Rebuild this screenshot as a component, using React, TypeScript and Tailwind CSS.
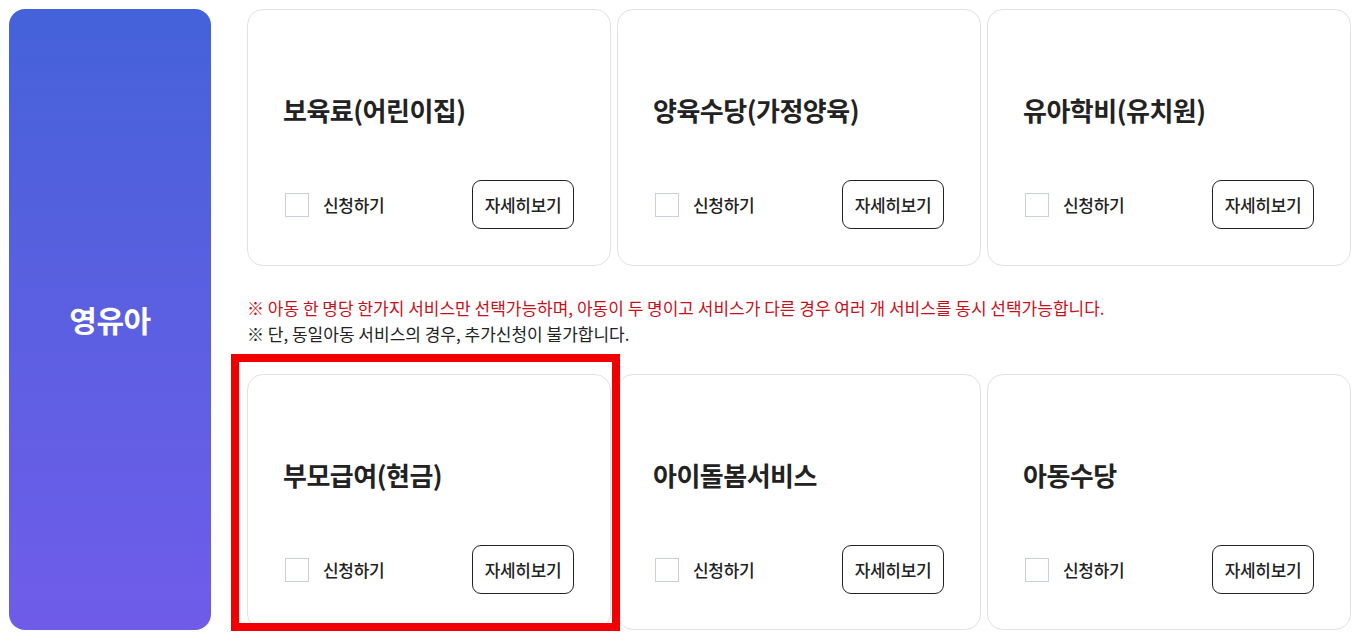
const font = "font-['Noto_Sans_CJK_KR','Noto_Sans',sans-serif]"

type Service = {
  title: string
}

const topRow: Service[] = [
  { title: '보육료(어린이집)' },
  { title: '양육수당(가정양육)' },
  { title: '유아학비(유치원)' },
]

const bottomRow: Service[] = [
  { title: '부모급여(현금)' },
  { title: '아이돌봄서비스' },
  { title: '아동수당' },
]

function ServiceCard({ service, height }: { service: Service; height: string }) {
  return (
    <div
      className={`flex flex-col rounded-[16px] border border-[#e2e2e2] bg-white pl-[35px] pr-[36px] pt-[83px] ${height}`}
    >
      <h3 className="text-[26px] font-bold leading-[34px] tracking-[-0.5px] text-[#222]">
        {service.title}
      </h3>
      <div className="mt-[53px] flex items-center justify-between">
        <label className="ml-[2px] flex items-center gap-[14px]">
          <span className="block h-[24px] w-[24px] border border-[#c9cfdc] bg-white" />
          <span className="text-[17px] font-medium tracking-[-0.3px] text-[#222]">신청하기</span>
        </label>
        <button
          type="button"
          className="flex h-[49px] w-[102px] items-center justify-center rounded-[9px] border border-[#222] bg-white text-[17px] font-medium tracking-[-0.3px] text-[#222]"
        >
          자세히보기
        </button>
      </div>
    </div>
  )
}

export default function App() {
  return (
    <div className={`relative flex w-[1364px] gap-[36px] bg-white p-[9px] ${font}`}>
      <div className="flex h-[621px] w-[202px] shrink-0 items-center justify-center rounded-[16px] bg-gradient-to-b from-[#4462d9] to-[#6f5ce9]">
        <span className="text-[30px] font-bold tracking-[-0.5px] text-white">영유아</span>
      </div>
      <div className="w-[1104px]">
        <div className="grid grid-cols-3 gap-[6px]">
          {topRow.map((s) => (
            <ServiceCard key={s.title} service={s} height="h-[257px]" />
          ))}
        </div>
        <div className="mb-[27px] mt-[29px] text-[17px] leading-[26px]">
          <p className="text-[#c8101a]">
            ※ 아동 한 명당 한가지 서비스만 선택가능하며, 아동이 두 명이고 서비스가 다른 경우 여러 개 서비스를 동시 선택가능합니다.
          </p>
          <p className="text-[#222]">※ 단, 동일아동 서비스의 경우, 추가신청이 불가합니다.</p>
        </div>
        <div className="grid grid-cols-3 gap-[6px]">
          {bottomRow.map((s) => (
            <ServiceCard key={s.title} service={s} height="h-[256px]" />
          ))}
        </div>
      </div>
      {/* highlight box */}
      <div className="pointer-events-none absolute left-[231px] top-[354px] h-[277px] w-[389px] border-[8px] border-[#f20000]" />
    </div>
  )
}
